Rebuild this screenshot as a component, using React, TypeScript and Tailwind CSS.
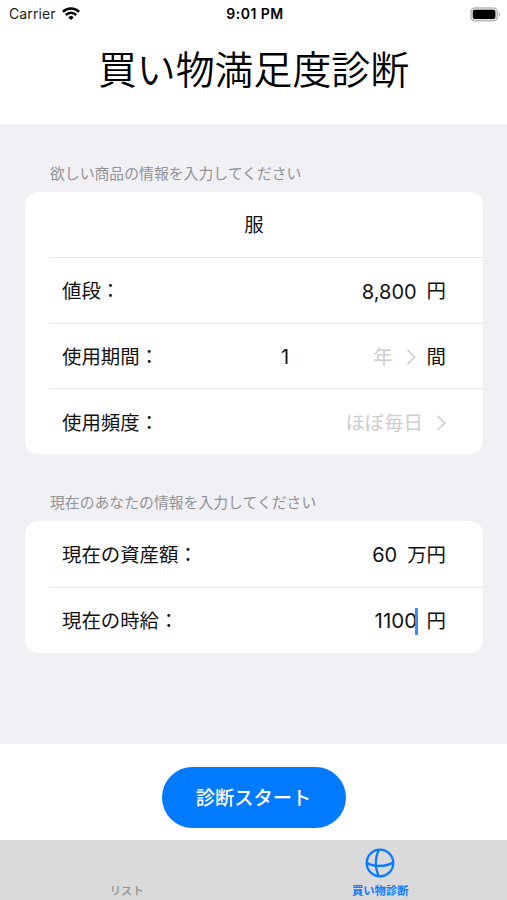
import React, { useState } from 'react';

const jpFont = "font-['Inter','Noto_Sans_CJK_JP',sans-serif]";

const Chevron: React.FC = () => (
  <svg viewBox="0 0 9 16" className="w-[9px] h-4 shrink-0" fill="none" stroke="#cdcdcf" strokeWidth="1.7" strokeLinecap="round" strokeLinejoin="round">
    <path d="M1 1.5 L7.8 8 L1 14.5" />
  </svg>
);

const WifiIcon: React.FC = () => (
  <svg viewBox="0 0 18 14" className="w-[18px] h-3.5" fill="none" stroke="#000" strokeWidth="2.5">
    <path d="M0.9 4.9 A11.4 11.4 0 0 1 17.1 4.9" />
    <path d="M3.8 8 A7.3 7.3 0 0 1 14.2 8" />
    <path d="M6.3 10.4 A3.9 3.9 0 0 1 11.7 10.4 L9 13.1 Z" fill="#000" stroke="none" />
  </svg>
);

const BatteryIcon: React.FC = () => (
  <svg viewBox="0 0 31 15" className="w-[31px] h-[15px]">
    <rect x="0.9" y="0.9" width="26.4" height="13" rx="4" fill="#e2e2e2" stroke="#b5b5b5" strokeWidth="1.3" />
    <rect x="2.8" y="2.8" width="22.6" height="9.2" rx="2" fill="#000" />
    <path d="M28.6 5.2 C30.6 5.8 30.6 9 28.6 9.6 Z" fill="#b0b0b0" />
  </svg>
);

const BallIcon: React.FC = () => (
  <svg viewBox="0 0 30 30" className="w-[30px] h-[30px]" fill="none" stroke="#0a7aff" strokeWidth="2.3">
    <circle cx="15" cy="15" r="13.3" />
    <path d="M14 1.7 C9.8 9.5 9.8 20.5 14 28.3" />
    <path d="M1.9 14.8 C8 19 21 19.2 28.2 14.2" />
  </svg>
);

interface RowProps {
  label: string;
  last?: boolean;
  children: React.ReactNode;
}

const Row: React.FC<RowProps> = ({ label, last, children }) => (
  <div className={`ml-[25px] flex flex-1 items-center pl-3 pr-[37px] pt-[3px] ${last ? '' : 'border-b-[1.5px] border-[#e9e9ec]'}`}>
    <span>{label}</span>
    <div className="flex flex-1 items-center justify-end">{children}</div>
  </div>
);

const App: React.FC = () => {
  const [tab, setTab] = useState('diagnosis');

  return (
    <div className={`flex h-[900px] w-[507px] flex-col overflow-hidden bg-white text-black ${jpFont}`} lang="ja">
      <header className="h-[124px] shrink-0">
        <div className="flex h-7 items-center text-[14px] leading-none">
          <div className="flex flex-1 items-center gap-1.5 pl-[9px] text-[#222]">
            <span className="tracking-[0.1px]">Carrier</span>
            <WifiIcon />
          </div>
          <span className="font-semibold text-[14px] tracking-[0.5px]">9:01 PM</span>
          <div className="flex flex-1 justify-end pr-1.5">
            <BatteryIcon />
          </div>
        </div>
        <h1 className="mt-3 text-center text-[38.9px] leading-[60px] font-[350]">買い物満足度診断</h1>
      </header>

      <main className="h-[620px] shrink-0 bg-[#f0f0f5] pl-[25px] pr-6 text-[19.4px] text-[#111]">
        <p className="pt-[39px] pl-[25px] text-[14.85px] leading-[22px] text-[#929297]">欲しい商品の情報を入力してください</p>
        <section className="mt-[7px] flex h-[262px] flex-col rounded-[13px] bg-white">
          <div className="ml-[25px] flex flex-1 items-center justify-center border-b-[1.5px] border-[#e9e9ec] pt-[3px] pr-[25px]">服</div>
          <Row label="値段：">
            <span className="mr-2.5 text-[20px]">8,800</span>
            <span>円</span>
          </Row>
          <Row label="使用期間：">
            <span className="mr-[84px] text-[20px]">1</span>
            <span className="mr-3.5 text-[#cdcdcf]">年</span>
            <Chevron />
            <span className="ml-[11px]">間</span>
          </Row>
          <Row label="使用頻度：" last>
            <span className="mr-3.5 text-[#cdcdcf]">ほぼ毎日</span>
            <Chevron />
          </Row>
        </section>

        <p className="mt-[38px] pl-[25px] text-[14.85px] leading-[22px] text-[#929297]">現在のあなたの情報を入力してください</p>
        <section className="mt-[7px] flex h-[132px] flex-col rounded-[13px] bg-white">
          <Row label="現在の資産額：">
            <span className="mr-2.5 text-[20px]">60</span>
            <span>万円</span>
          </Row>
          <Row label="現在の時給：" last>
            <span className="text-[20.5px]">1100</span>
            <span className="-ml-0.5 mr-[9px] h-[27px] w-[2.5px] bg-[#3b8cf5]" />
            <span>円</span>
          </Row>
        </section>
      </main>

      <div className="flex h-24 shrink-0 items-start justify-center pt-[23px]">
        <button className="h-[61px] w-[184px] rounded-full bg-[#007aff] pt-0.5 text-[19.3px] font-medium text-white">
          診断スタート
        </button>
      </div>

      <nav className="flex h-[60px] shrink-0 bg-[#dadada] text-[11.3px] leading-4">
        <button onClick={() => setTab('list')} className="flex flex-1 flex-col items-center justify-end pb-px font-medium text-[#929292]">
          リスト
        </button>
        <button onClick={() => setTab('diagnosis')} className={`flex flex-1 flex-col items-center justify-end pb-px font-bold ${tab === 'diagnosis' ? 'text-[#0a7aff]' : 'text-[#929292]'}`}>
          <BallIcon />
          <span className="mt-[5px]">買い物診断</span>
        </button>
      </nav>
    </div>
  );
};

export default App;
